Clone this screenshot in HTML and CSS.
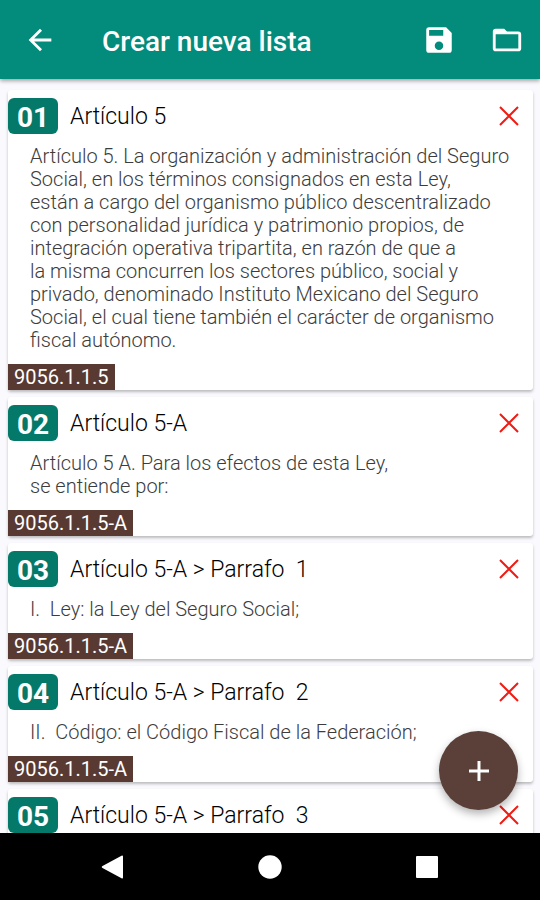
FILE: index.html
```html
<!DOCTYPE html>
<html lang="es">
<head>
<meta charset="utf-8">
<meta name="viewport" content="width=device-width, initial-scale=1">
<title>Crear nueva lista</title>
<link rel="stylesheet" href="styles.css">
</head>
<body>
<header class="appbar">
  <button class="icon-button" type="button" aria-label="Atrás"><svg class="icon" viewBox="0 0 24 24"><path d="M20 11H7.83l5.59-5.59L12 4l-8 8 8 8 1.410-1.410L7.830 13H20z"/></svg></button>
  <h1 class="title">Crear nueva lista</h1>
  <button class="icon-button" type="button" aria-label="Guardar"><svg class="icon" viewBox="0 0 24 24"><path d="M17 3H5a2 2 0 0 0-2 2v14a2 2 0 0 0 2 2h14a2 2 0 0 0 2-2V7zM12 19a3 3 0 1 1 0-6 3 3 0 0 1 0 6zM15 9H5V5h10z"/></svg></button>
  <button class="icon-button" type="button" aria-label="Abrir carpeta"><svg class="icon" viewBox="0 0 24 24"><path d="M20 6h-8l-2-2H4a2 2 0 0 0-2 2v12a2 2 0 0 0 2 2h16a2 2 0 0 0 2-2V8a2 2 0 0 0-2-2zm0 12H4V8h16z"/></svg></button>
</header>
<div class="content">
  <main class="list">
    <article class="card">
      <div class="card-head"><span class="number">01</span><h2 class="name">Artículo 5</h2><button class="remove" type="button" aria-label="Quitar 01"><svg class="cross" viewBox="0 0 20 20"><path d="M1 1l18 18M19 1L1 19"/></svg></button></div>
      <p class="text">Artículo 5. La organización y administración del Seguro<br>Social, en los términos consignados en esta Ley,<br>están a cargo del organismo público descentralizado<br>con personalidad jurídica y patrimonio propios, de<br>integración operativa tripartita, en razón de que a<br>la misma concurren los sectores público, social y<br>privado, denominado Instituto Mexicano del Seguro<br>Social, el cual tiene también el carácter de organismo<br>fiscal autónomo.</p>
      <span class="tag">9056.1.1.5</span>
    </article>
    <article class="card">
      <div class="card-head"><span class="number">02</span><h2 class="name">Artículo 5-A</h2><button class="remove" type="button" aria-label="Quitar 02"><svg class="cross" viewBox="0 0 20 20"><path d="M1 1l18 18M19 1L1 19"/></svg></button></div>
      <p class="text">Artículo 5 A. Para los efectos de esta Ley,<br>se entiende por:</p>
      <span class="tag">9056.1.1.5-A</span>
    </article>
    <article class="card">
      <div class="card-head"><span class="number">03</span><h2 class="name">Artículo 5-A &gt; Parrafo  1</h2><button class="remove" type="button" aria-label="Quitar 03"><svg class="cross" viewBox="0 0 20 20"><path d="M1 1l18 18M19 1L1 19"/></svg></button></div>
      <p class="text">I.  Ley: la Ley del Seguro Social;</p>
      <span class="tag">9056.1.1.5-A</span>
    </article>
    <article class="card">
      <div class="card-head"><span class="number">04</span><h2 class="name">Artículo 5-A &gt; Parrafo  2</h2><button class="remove" type="button" aria-label="Quitar 04"><svg class="cross" viewBox="0 0 20 20"><path d="M1 1l18 18M19 1L1 19"/></svg></button></div>
      <p class="text">II.  Código: el Código Fiscal de la Federación;</p>
      <span class="tag">9056.1.1.5-A</span>
    </article>
    <article class="card card-last">
      <div class="card-head"><span class="number">05</span><h2 class="name">Artículo 5-A &gt; Parrafo  3</h2><button class="remove" type="button" aria-label="Quitar 05"><svg class="cross" viewBox="0 0 20 20"><path d="M1 1l18 18M19 1L1 19"/></svg></button></div>
    </article>
  </main>
  <button class="fab" type="button" aria-label="Agregar"><svg class="plus" viewBox="0 0 22 22"><path d="M11 1v20M1 11h20"/></svg></button>
</div>
<nav class="navbar" aria-label="Sistema">
  <button class="nav-button" type="button" aria-label="Volver"><svg class="nav-icon" viewBox="0 0 24 24"><path d="M22 1.500v21a1 1 0 0 1-1.500.800L1.500 13a1.200 1.200 0 0 1 0-2L20.500.700A1 1 0 0 1 22 1.500z"/></svg></button>
  <button class="nav-button" type="button" aria-label="Inicio"><svg class="nav-icon" viewBox="0 0 24 24"><circle cx="12" cy="12" r="11.700"/></svg></button>
  <button class="nav-button" type="button" aria-label="Recientes"><svg class="nav-icon" viewBox="0 0 24 24"><rect x="1" y="1" width="22" height="22" rx="1"/></svg></button>
</nav>
</body>
</html>
```
FILE: styles.css
```css
* {
  box-sizing: border-box;
}

body {
  margin: 0;
  height: 100vh;
  display: flex;
  flex-direction: column;
  background: #faf9fd;
  font-family: Roboto, "Liberation Sans", sans-serif;
}

button {
  border: 0;
  padding: 0;
  background: none;
  display: flex;
  align-items: center;
  justify-content: center;
}

.appbar {
  flex: none;
  height: 79px;
  padding: 0 9px 0 16px;
  display: flex;
  align-items: center;
  gap: 20px;
  background: #038b7b;
  box-shadow: 0 2px 4px rgba(0, 0, 0, 0.35);
  z-index: 1;
}

.icon-button {
  width: 48px;
  height: 48px;
}

.icon {
  width: 34px;
  height: 34px;
  fill: #fff;
}

.title {
  flex: 1;
  margin: 0;
  padding: 4px 0 0 18px;
  font-size: 28px;
  line-height: 32px;
  font-weight: 500;
  color: #fff;
}

.content {
  position: relative;
  flex: 1;
  min-height: 0;
}

.list {
  height: 100%;
  overflow: hidden;
  padding: 11px 7px 0 8px;
  display: flex;
  flex-direction: column;
  gap: 7px;
}

.card {
  flex: none;
  padding-top: 8px;
  display: flex;
  flex-direction: column;
  align-items: flex-start;
  background: #fff;
  border-radius: 3px;
  box-shadow: 0 2px 3px rgba(0, 0, 0, 0.25);
}

.card-last {
  padding-bottom: 72px;
}

.card-head {
  align-self: stretch;
  display: flex;
  align-items: center;
  padding-right: 9px;
}

.number {
  width: 50px;
  height: 36px;
  padding-top: 2px;
  border-radius: 6px;
  background: #04796a;
  color: #fff;
  font-size: 28px;
  line-height: 36px;
  font-weight: 700;
  text-align: center;
}

.name {
  flex: 1;
  margin: 0;
  padding: 2px 0 0 12px;
  font-size: 23px;
  line-height: 34px;
  font-weight: 300;
  color: #000;
  white-space: pre-wrap;
}

.remove {
  width: 30px;
  height: 36px;
}

.cross {
  width: 20px;
  height: 20px;
  fill: none;
  stroke: #ee1c14;
  stroke-width: 2;
}

.text {
  margin: 0;
  padding: 11px 0 12px 22px;
  font-size: 20px;
  line-height: 23px;
  font-weight: 300;
  color: #3c3c3c;
  white-space: pre-wrap;
}

.tag {
  padding: 0 6px;
  background: #583a33;
  color: #fff;
  font-size: 20px;
  line-height: 26px;
}

.fab {
  position: absolute;
  right: 22px;
  bottom: 23px;
  width: 79px;
  height: 79px;
  border-radius: 50%;
  background: #5b4039;
  box-shadow: 0 4px 9px rgba(0, 0, 0, 0.3);
}

.plus {
  width: 22px;
  height: 22px;
  fill: none;
  stroke: #fff;
  stroke-width: 3;
}

.navbar {
  flex: none;
  height: 67px;
  padding: 0 34px;
  display: grid;
  grid-template-columns: repeat(3, 1fr);
  background: #000;
  z-index: 1;
}

.nav-icon {
  width: 24px;
  height: 24px;
  fill: #fff;
}
```
